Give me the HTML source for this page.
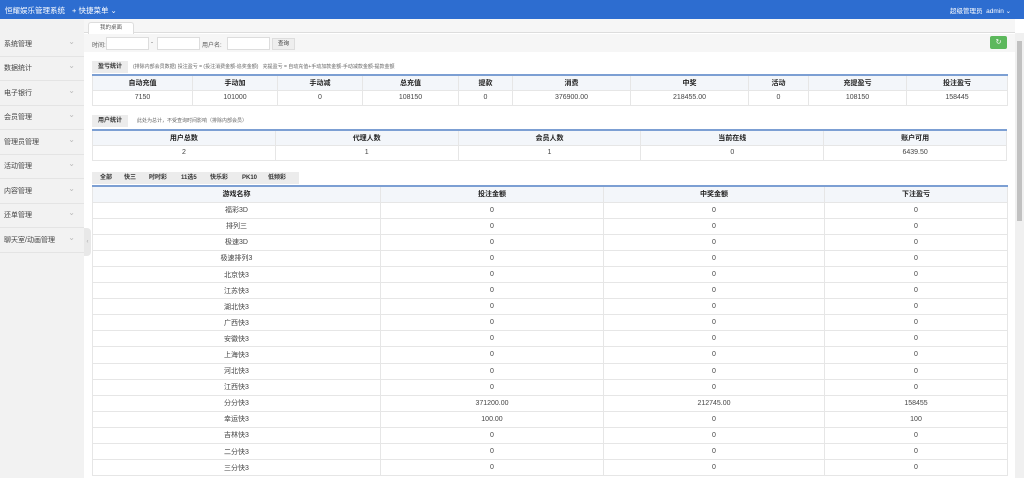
<!DOCTYPE html>
<html><head><meta charset="utf-8"><style>
*{margin:0;padding:0;box-sizing:border-box}
body{width:1024px;height:478px;overflow:hidden;font-family:"Liberation Sans","Noto Sans CJK SC",sans-serif;font-size:7px;color:#333;background:#fff;position:relative}
.top{position:absolute;left:0;top:0;width:1024px;height:19px;background:#2d6dd0;color:#fff}
.top span{position:absolute;top:5px;font-size:7.5px;white-space:nowrap}
.side{position:absolute;left:0;top:19px;width:84px;height:459px;background:#f2f2f2}
.side div{position:absolute;left:0;width:84px;height:24px;border-bottom:1px solid #e4e4e4;padding:0 0 0 4px;line-height:24px;font-size:7px;color:#444}
.side div:after{content:"⌄";position:absolute;right:9px;top:-3px;color:#bbb;font-size:8px}
.handle{position:absolute;left:84px;top:228px;width:7px;height:28px;background:#e8e8e8;border-radius:0 4px 4px 0;color:#aaa;font-size:6px;line-height:28px;text-align:center}
.tabbar{position:absolute;left:84px;top:19px;width:931px;height:14px;background:#f6f6f6;border-bottom:1px solid #ddd}
.tab{position:absolute;left:88px;top:22px;width:46px;height:12px;background:#fff;border:1px solid #ddd;border-bottom:none;border-radius:3px 3px 0 0;font-size:5.5px;text-align:center;line-height:11px;color:#555}
.tool{position:absolute;left:84px;top:34px;width:931px;height:18px;background:#f6f6f6}
.inp{position:absolute;top:37px;height:13px;border:1px solid #ddd;background:#fff}
.lbl{position:absolute;top:40px;font-size:6px;color:#555}
.btn{position:absolute;top:38px;left:272px;width:23px;height:12px;background:#eee;border:1px solid #ddd;font-size:5.5px;text-align:center;line-height:10px}
.green{position:absolute;left:990px;top:36px;width:17px;height:13px;background:#5cb85c;border-radius:2px;color:#fff;font-size:7px;text-align:center;line-height:13px}
.scroll{position:absolute;left:1015px;top:33px;width:9px;height:445px;background:#f0f0f0}
.scroll div{position:absolute;left:2px;top:8px;width:5px;height:180px;background:#c1c1c1}
.cap{position:absolute;left:92px;height:12px;background:#ececec;font-size:6px;font-weight:bold;line-height:12px;padding:0 6px;color:#333}
.note{position:absolute;font-size:5px;color:#666;white-space:nowrap}
table{position:absolute;left:92px;width:915px;border-collapse:collapse;table-layout:fixed}
td,th{border:1px solid #e6e6e6;text-align:center;font-size:7px;height:15px;padding:0;font-weight:normal;color:#444}
th{background:#f3f6fa;color:#222;font-weight:bold}
table{border-top:2px solid #7c9fd3}
.g td,.g th{height:16.1px;font-size:7px}
.gt{position:absolute;left:92px;top:172px;height:12px;background:#ececec;width:207px}
.gt span{position:absolute;top:0;line-height:12px;font-size:6px;font-weight:bold;white-space:nowrap}
</style></head><body>
<div class="top"><span style="left:5px">恒耀娱乐管理系统</span><span style="left:72px">+ 快捷菜单 ⌄</span><span style="left:950px;font-size:6.5px">超级管理员&nbsp; admin ⌄</span></div>
<div class="side">
<div style="top:14px">系统管理</div><div style="top:38px">数据统计</div><div style="top:63px">电子银行</div><div style="top:87px">会员管理</div><div style="top:112px">管理员管理</div><div style="top:136px">活动管理</div><div style="top:161px">内容管理</div><div style="top:185px">还单管理</div><div style="top:210px">聊天室/动画管理</div>
</div>
<div class="handle">‹</div>
<div class="tabbar"></div><div class="tab">我的桌面</div>
<div class="tool"></div>
<span class="lbl" style="left:92px">时间:</span><div class="inp" style="left:106px;width:43px"></div><span class="lbl" style="left:151px">-</span><div class="inp" style="left:157px;width:43px"></div>
<span class="lbl" style="left:202px">用户名:</span><div class="inp" style="left:227px;width:43px"></div><div class="btn">查询</div>
<div class="green">↻</div>
<div class="scroll"><div></div></div>

<div class="cap" style="top:61px">盈亏统计</div>
<div class="note" style="left:133px;top:63px">(排除内部会员数据) 投注盈亏 = (投注消费金额-追奖金额)&nbsp;&nbsp; 充提盈亏 = 自动充值+手动加款金额-手动减款金额-提款金额</div>
<table style="top:74px"><colgroup><col style="width:100px"><col style="width:85px"><col style="width:85px"><col style="width:96px"><col style="width:54px"><col style="width:118px"><col style="width:118px"><col style="width:60px"><col style="width:98px"><col style="width:101px"></colgroup>
<tr><th>自动充值</th><th>手动加</th><th>手动减</th><th>总充值</th><th>提款</th><th>消费</th><th>中奖</th><th>活动</th><th>充提盈亏</th><th>投注盈亏</th></tr>
<tr><td>7150</td><td>101000</td><td>0</td><td>108150</td><td>0</td><td>376900.00</td><td>218455.00</td><td>0</td><td>108150</td><td>158445</td></tr></table>

<div class="cap" style="top:115px">用户统计</div>
<div class="note" style="left:137px;top:117px">此处为总计，不受查询时间影响（排除内部会员）</div>
<table style="top:129px"><tr><th>用户总数</th><th>代理人数</th><th>会员人数</th><th>当前在线</th><th>账户可用</th></tr>
<tr><td>2</td><td>1</td><td>1</td><td>0</td><td>6439.50</td></tr></table>

<div class="gt"><span style="left:8px">全部</span><span style="left:32px">快三</span><span style="left:57px">时时彩</span><span style="left:89px">11选5</span><span style="left:118px">快乐彩</span><span style="left:150px">PK10</span><span style="left:176px">低频彩</span></div>
<table class="g" style="top:185px"><colgroup><col style="width:288px"><col style="width:223px"><col style="width:221px"><col style="width:183px"></colgroup>
<tr><th>游戏名称</th><th>投注金额</th><th>中奖金额</th><th>下注盈亏</th></tr>
<tr><td>福彩3D</td><td>0</td><td>0</td><td>0</td></tr>
<tr><td>排列三</td><td>0</td><td>0</td><td>0</td></tr>
<tr><td>极速3D</td><td>0</td><td>0</td><td>0</td></tr>
<tr><td>极速排列3</td><td>0</td><td>0</td><td>0</td></tr>
<tr><td>北京快3</td><td>0</td><td>0</td><td>0</td></tr>
<tr><td>江苏快3</td><td>0</td><td>0</td><td>0</td></tr>
<tr><td>湖北快3</td><td>0</td><td>0</td><td>0</td></tr>
<tr><td>广西快3</td><td>0</td><td>0</td><td>0</td></tr>
<tr><td>安徽快3</td><td>0</td><td>0</td><td>0</td></tr>
<tr><td>上海快3</td><td>0</td><td>0</td><td>0</td></tr>
<tr><td>河北快3</td><td>0</td><td>0</td><td>0</td></tr>
<tr><td>江西快3</td><td>0</td><td>0</td><td>0</td></tr>
<tr><td>分分快3</td><td>371200.00</td><td>212745.00</td><td>158455</td></tr>
<tr><td>幸运快3</td><td>100.00</td><td>0</td><td>100</td></tr>
<tr><td>吉林快3</td><td>0</td><td>0</td><td>0</td></tr>
<tr><td>二分快3</td><td>0</td><td>0</td><td>0</td></tr>
<tr><td>三分快3</td><td>0</td><td>0</td><td>0</td></tr>
</table>
</body></html>
